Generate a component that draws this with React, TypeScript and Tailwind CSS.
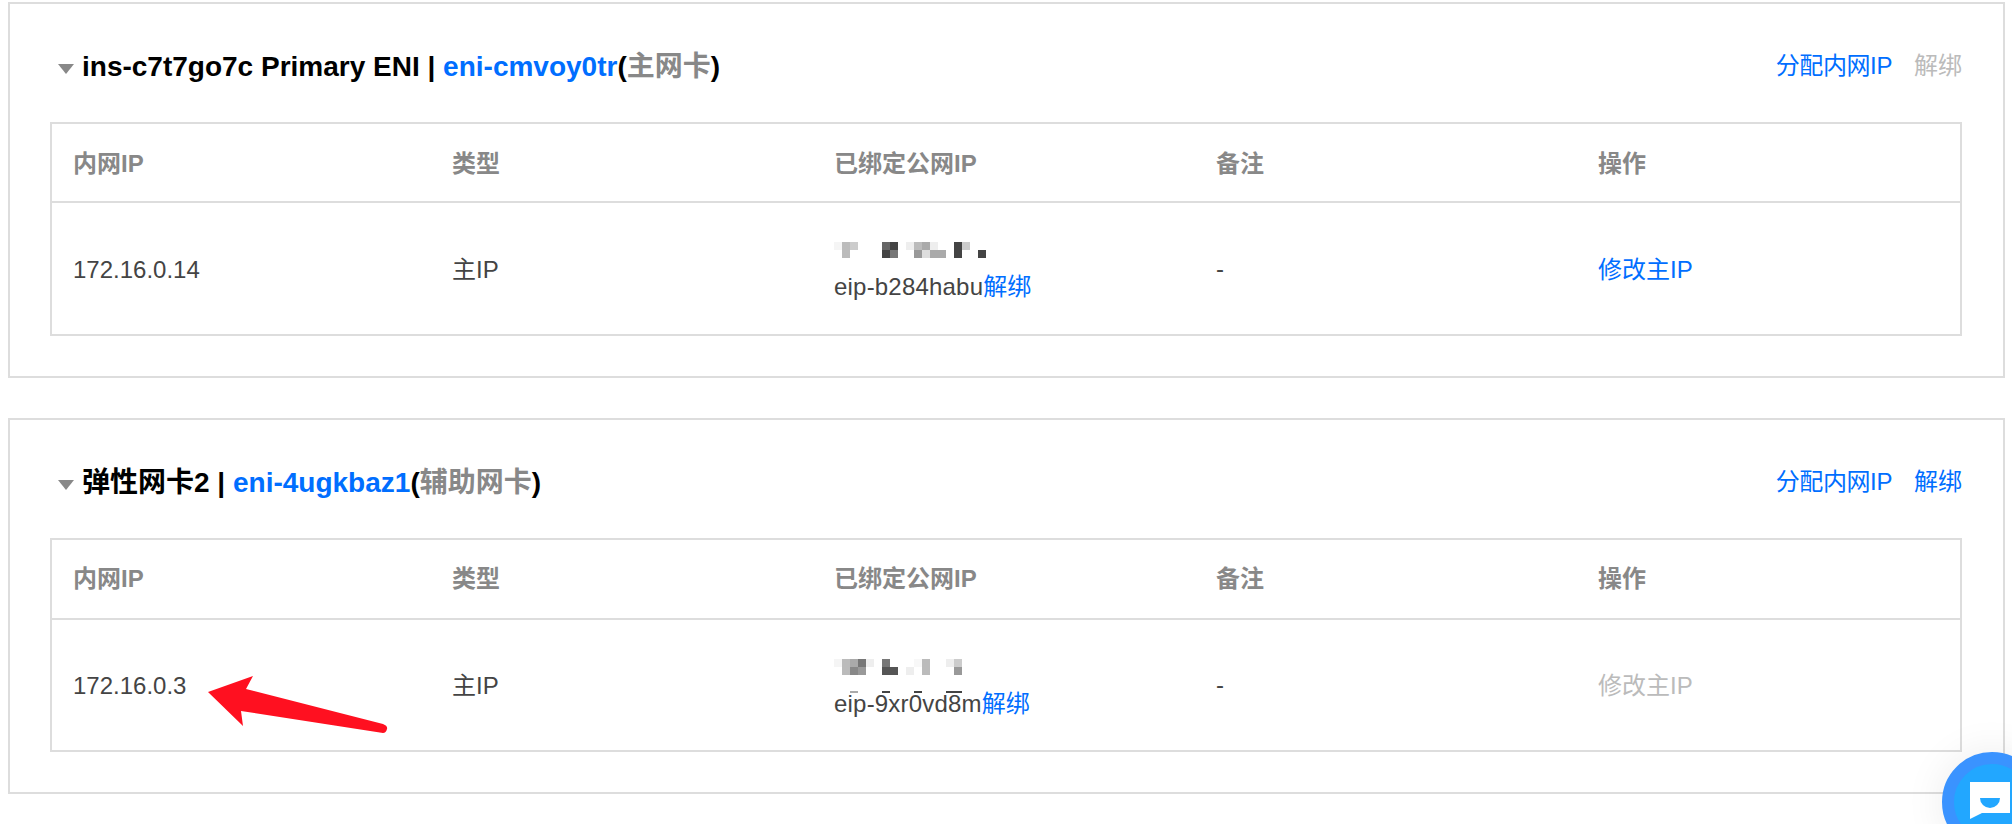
import React from "react";

const font = { fontFamily: '"Liberation Sans","Noto Sans CJK SC",sans-serif' };

type Cell = [number, number, string];

const pixA: Cell[] = [
  [0,0,"#f5f5f5"],[1,0,"#bbbbbb"],[2,0,"#cccccc"],[1,1,"#bbbbbb"],
  [6,0,"#666666"],[7,0,"#444444"],[6,1,"#444444"],[7,1,"#777777"],
  [9,0,"#eeeeee"],[10,0,"#bbbbbb"],[11,0,"#aaaaaa"],[12,0,"#eeeeee"],
  [10,1,"#999999"],[11,1,"#dddddd"],[12,1,"#aaaaaa"],[13,1,"#aaaaaa"],
  [15,0,"#444444"],[16,0,"#cccccc"],[15,1,"#444444"],[18,1,"#444444"],
];

const pixB: Cell[] = [
  [0,0,"#f5f5f5"],[1,0,"#bbbbbb"],[2,0,"#aaaaaa"],[3,0,"#777777"],[4,0,"#eeeeee"],
  [1,1,"#bbbbbb"],[2,1,"#888888"],[3,1,"#999999"],
  [6,0,"#777777"],[6,1,"#555555"],[7,1,"#555555"],
  [9,1,"#eeeeee"],[10,0,"#f8f8f8"],[11,0,"#bbbbbb"],[11,1,"#bbbbbb"],
  [14,0,"#eeeeee"],[15,0,"#cccccc"],[15,1,"#999999"],
];

function Pixels({ cells, ticks }: { cells: Cell[]; ticks?: boolean }) {
  return (
    <svg width="160" height="16" viewBox="0 0 160 16" className="block overflow-visible">
      {cells.map(([x, y, c], i) => (
        <rect key={i} x={x * 8} y={y * 8} width="8" height="8" fill={c} />
      ))}
      {ticks && (
        <g>
          <rect x="16" y="32" width="8" height="2" fill="#aaaaaa" />
          <rect x="48" y="32" width="8" height="2" fill="#444444" />
          <rect x="80" y="32" width="8" height="2" fill="#444444" />
          <rect x="112" y="32" width="16" height="2" fill="#444444" />
        </g>
      )}
    </svg>
  );
}

function Card({
  title, eni, kind, unbindMuted, ip, cells, eip, ticks, modifyMuted, className, headClass,
}: {
  title: string; eni: string; kind: string; unbindMuted: boolean; ip: string;
  cells: Cell[]; eip: string; ticks?: boolean; modifyMuted: boolean; className?: string; headClass: string;
}) {
  return (
    <section className={`ml-2 w-[1997px] h-[376px] border-2 border-[#dddddd] bg-white pt-[42px] pl-10 ${className ?? ""}`}>
      <div className="flex h-10 w-[1912px] items-center justify-between">
        <div className="flex items-center">
          <span className="ml-2 mr-2 mt-[6px] h-0 w-0 border-x-[8px] border-t-[10px] border-x-transparent border-t-[#888888]" />
          <h2 className="pt-[2px] text-[28px] font-bold text-black whitespace-nowrap">
            {title} | <span className="text-[#006eff]">{eni}</span>(<span className="text-[#888888]">{kind}</span>)
          </h2>
        </div>
        <div className="flex gap-[22px] text-[24px]">
          <span className="tracking-[-0.4px] text-[#006eff]">分配内网IP</span>
          <span className={unbindMuted ? "text-[#bbbbbb]" : "text-[#006eff]"}>解绑</span>
        </div>
      </div>
      <div className="mt-[36px] flex h-[214px] w-[1912px] flex-col border-2 border-[#dddddd] text-[24px] text-[#444444]">
        <div className={`grid grid-cols-[381px_381px_382px_382px_1fr] items-center border-b-2 border-[#dddddd] font-bold text-[#888888] ${headClass}`}>
          <div className="pl-[21px]">内网IP</div>
          <div className="pl-[19px]">类型</div>
          <div className="pl-5">已绑定公网IP</div>
          <div className="pl-5">备注</div>
          <div className="pl-5">操作</div>
        </div>
        <div className="grid flex-1 grid-cols-[381px_381px_382px_382px_1fr] items-center">
          <div className="pl-[21px] pt-[2px]">{ip}</div>
          <div className="pl-[19px] pt-[2px]">主IP</div>
          <div className="pl-5 pt-2">
            <Pixels cells={cells} ticks={ticks} />
            <div className="mt-[13px] leading-8 whitespace-nowrap">
              <span className="tracking-[0.2px]">{eip}</span><span className="text-[#006eff]">解绑</span>
            </div>
          </div>
          <div className="pl-5">-</div>
          <div className={`pl-5 pt-[2px] ${modifyMuted ? "text-[#bbbbbb]" : "text-[#006eff]"}`}>修改主IP</div>
        </div>
      </div>
    </section>
  );
}

export default function App() {
  return (
    <div className="relative h-[824px] w-[2012px] overflow-hidden bg-white pt-[2px]" style={font}>
      <Card
        headClass="h-[79px] pt-[2px]"
        title="ins-c7t7go7c Primary ENI" eni="eni-cmvoy0tr" kind="主网卡" unbindMuted
        ip="172.16.0.14" cells={pixA} eip="eip-b284habu" modifyMuted={false}
      />
      <Card
        className="mt-10"
        headClass="h-[80px]"
        title="弹性网卡2" eni="eni-4ugkbaz1" kind="辅助网卡" unbindMuted={false}
        ip="172.16.0.3" cells={pixB} eip="eip-9xr0vd8m" ticks modifyMuted
      />
      <svg className="absolute left-[200px] top-[670px]" width="195" height="70" viewBox="200 670 195 70">
        <path d="M208 692 L253 676 L246 689 L383 724 Q388 726 387 729 Q386 733 383 733 L241 711 L243 726 Z" fill="#ff1020" />
      </svg>
      <div className="absolute left-[1942px] top-[752px] h-[100px] w-[100px] rounded-full border-[12px] border-[#3a93ff] bg-[#22a7ff] shadow-[0_0_40px_rgba(0,0,0,0.08)]">
        <svg className="absolute left-[16px] top-[18px]" width="40" height="37" viewBox="0 0 40 37">
          <path d="M0 0 H40 V31 H12 L0 37 Z" fill="#ffffff" />
          <path d="M10 16 H30 A10 10 0 0 1 10 16 Z" fill="#22a7ff" />
        </svg>
      </div>
    </div>
  );
}
